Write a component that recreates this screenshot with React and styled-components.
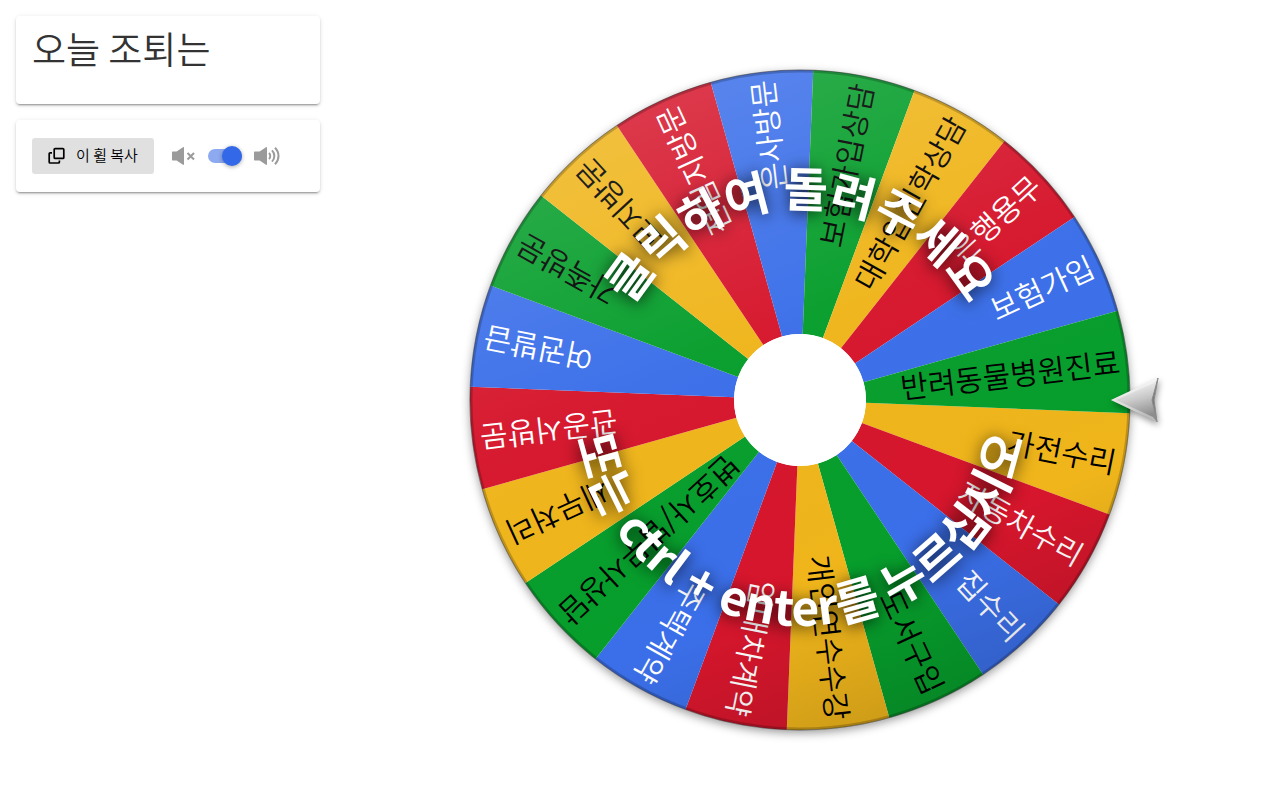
import React, { useState } from 'react';
import styled, { createGlobalStyle } from 'styled-components';

const CENTER = 400;
const RADIUS = 330;
const HOLE = 66;
const SLICE = 18;
const FIRST_ANGLE = 2.3;

const colors = {
  yellow: '#efb51b',
  red: '#d6162c',
  blue: '#3b6fe9',
  green: '#079e2c',
};

const entries = [
  { label: '가전수리', color: 'yellow' },
  { label: '자동차수리', color: 'red' },
  { label: '집수리', color: 'blue' },
  { label: '도서구입', color: 'green' },
  { label: '개인연수수강', color: 'yellow' },
  { label: '임대차계약', color: 'red' },
  { label: '주택계약', color: 'blue' },
  { label: '변호사/법무사상담', color: 'green' },
  { label: '세무처리', color: 'yellow' },
  { label: '관공서방문', color: 'red' },
  { label: '여권발급', color: 'blue' },
  { label: '가족방문', color: 'green' },
  { label: '묘지방문', color: 'yellow' },
  { label: '전임지방문', color: 'red' },
  { label: '은사방문', color: 'blue' },
  { label: '보험가입상담', color: 'green' },
  { label: '대학입진학상담', color: 'yellow' },
  { label: '은행용무', color: 'red' },
  { label: '보험가입', color: 'blue' },
  { label: '반려동물병원진료', color: 'green' },
];

const point = (angle, r) => {
  const rad = (angle * Math.PI) / 180;
  return `${(CENTER + r * Math.cos(rad)).toFixed(2)} ${(CENTER + r * Math.sin(rad)).toFixed(2)}`;
};

const slicePath = (start, end) =>
  `M${point(start, HOLE)} L${point(start, RADIUS)} A${RADIUS} ${RADIUS} 0 0 1 ${point(end, RADIUS)} L${point(end, HOLE)} A${HOLE} ${HOLE} 0 0 0 ${point(start, HOLE)} Z`;

const CopyIcon = () => (
  <svg width="18" height="18" viewBox="0 0 18 18" fill="none" stroke="#000" strokeWidth="1.7" strokeLinejoin="round" aria-hidden="true">
    <rect x="6.2" y="1.6" width="9.6" height="9.8" rx="1" />
    <path d="M4 5.800H2.200a1 1 0 0 0-1 1v8.200a1 1 0 0 0 1 1h8.200a1 1 0 0 0 1-1v-1.400" />
  </svg>
);

const MuteIcon = () => (
  <svg width="24" height="20" viewBox="0 0 24 20" aria-hidden="true">
    <path d="M1 5.500h3.600L11 1.200c.6-.3 1 0 1 .6v16.400c0 .6-.4.9-1 .6L4.600 14.500H1c-.6 0-1-.4-1-1v-7c0-.6.4-1 1-1z" fill="#9b9b9b" />
    <path d="M15.500 7l6.500 6.500M22 7l-6.500 6.500" stroke="#9b9b9b" strokeWidth="2" />
  </svg>
);

const VolumeIcon = () => (
  <svg width="28" height="20" viewBox="0 0 28 20" aria-hidden="true">
    <path d="M1 5.500h4.600L12 1.200c.6-.3 1 0 1 .6v16.400c0 .6-.4.9-1 .6L5.600 14.500H1c-.6 0-1-.4-1-1v-7c0-.6.4-1 1-1z" fill="#9b9b9b" />
    <path d="M15 7c1.600 1.700 1.600 4.300 0 6M18 4.400c3.100 3.200 3.100 8 0 11.200M21 1.800c4.700 4.700 4.700 11.700 0 16.400" fill="none" stroke="#9b9b9b" strokeWidth="2" />
  </svg>
);

const Wheel = () => (
  <WheelSvg viewBox="0 0 800 800" role="img" aria-label="오늘 조퇴는">
    <defs>
      <linearGradient id="shine" x1="0.3" y1="0" x2="0.7" y2="1">
        <stop offset="0" stopColor="#fff" stopOpacity="0.16" />
        <stop offset="0.4" stopColor="#fff" stopOpacity="0.02" />
        <stop offset="0.75" stopColor="#000" stopOpacity="0" />
        <stop offset="1" stopColor="#000" stopOpacity="0.16" />
      </linearGradient>
      <linearGradient id="pointer" x1="0" y1="0" x2="0.3" y2="1">
        <stop offset="0.3" stopColor="#ececec" />
        <stop offset="0.6" stopColor="#c8c8c8" />
        <stop offset="1" stopColor="#8d8d8d" />
      </linearGradient>
      <path id="topArc" d="M207 400 A193 193 0 0 1 593 400" />
      <path id="bottomArc" d="M174 400 A226 226 0 0 0 626 400" />
    </defs>

    <WheelShadow cx={CENTER} cy={CENTER} r={RADIUS} />
    {entries.map(({ label, color }, i) => (
      <path
        key={label}
        d={slicePath(FIRST_ANGLE + i * SLICE, FIRST_ANGLE + (i + 1) * SLICE)}
        fill={colors[color]}
      />
    ))}
    {entries.map(({ label, color }, i) => (
      <SliceLabel
        key={label}
        x={CENTER + 322}
        y={CENTER + 11}
        $light={color === 'red' || color === 'blue'}
        transform={`rotate(${FIRST_ANGLE + (i + 0.5) * SLICE} ${CENTER} ${CENTER})`}
      >
        {label}
      </SliceLabel>
    ))}
    <circle cx={CENTER} cy={CENTER} r={RADIUS} fill="url(#shine)" />
    <circle cx={CENTER} cy={CENTER} r={RADIUS - 1} fill="none" stroke="#000" strokeOpacity="0.2" strokeWidth="3" />
    <circle cx={CENTER} cy={CENTER} r={RADIUS} fill="none" stroke="#222" strokeOpacity="0.4" strokeWidth="1" />
    <circle cx={CENTER} cy={CENTER} r={HOLE} fill="#fff" />

    <Hint>
      <textPath href="#topArc" startOffset="50%">클릭하여 돌려주세요</textPath>
    </Hint>
    <Hint>
      <textPath href="#bottomArc" startOffset="50%">또는 ctrl + enter를 누르십시오</textPath>
    </Hint>

    <Pointer>
      <path d="M711 400L758 378L752 400L757 422Z" fill="url(#pointer)" />
      <path d="M711 400L758 378L754 383L716 400L753 417L757 422Z" fill="#fff" fillOpacity="0.4" />
      <path d="M758 378L752 400L757 422L754 400Z" fill="#777" stroke="#8a8a8a" strokeWidth="1" />
    </Pointer>
  </WheelSvg>
);

const App = () => {
  const [sound, setSound] = useState(true);

  return (
    <Page>
      <GlobalStyle />
      <Sidebar>
        <TitleCard>
          <Title>오늘 조퇴는</Title>
        </TitleCard>
        <ToolCard>
          <CopyButton type="button">
            <CopyIcon />
            <CopyLabel>이 휠 복사</CopyLabel>
          </CopyButton>
          <SoundGroup>
            <MuteIcon />
            <Switch
              type="checkbox"
              role="switch"
              aria-label="소리"
              checked={sound}
              onChange={(e) => setSound(e.target.checked)}
            />
            <VolumeIcon />
          </SoundGroup>
        </ToolCard>
      </Sidebar>
      <Stage>
        <Wheel />
      </Stage>
    </Page>
  );
};

const GlobalStyle = createGlobalStyle`
  * {
    box-sizing: border-box;
  }

  body {
    margin: 0;
    background: #fff;
    color: #333;
    font-family: "Noto Sans CJK KR", "Noto Sans", sans-serif;
  }
`;

const Page = styled.div`
  display: grid;
  grid-template-columns: 1fr 3fr;
  min-height: 100vh;
`;

const Sidebar = styled.aside`
  display: flex;
  flex-direction: column;
  gap: 16px;
  padding: 16px 0 16px 16px;
`;

const Card = styled.section`
  padding: 16px;
  background: #fff;
  border-radius: 4px;
  box-shadow: 0 3px 1px -2px rgba(0, 0, 0, 0.2), 0 2px 2px 0 rgba(0, 0, 0, 0.14),
    0 1px 5px 0 rgba(0, 0, 0, 0.12);
`;

const TitleCard = styled(Card)`
  padding-bottom: 40px;
`;

const Title = styled.h1`
  margin: 0;
  font-size: 37px;
  font-weight: 350;
  line-height: 32px;
`;

const ToolCard = styled(Card)`
  display: flex;
  align-items: center;
  gap: 18px;
  min-height: 72px;
`;

const CopyButton = styled.button`
  display: flex;
  align-items: center;
  gap: 10px;
  height: 36px;
  padding: 0 16px;
  border: none;
  border-radius: 3px;
  background: #e0e0e0;
  color: #000;
  font-family: inherit;
  font-size: 15px;
  font-weight: 350;
  cursor: pointer;
`;

const CopyLabel = styled.span`
  padding-bottom: 4px;
`;

const SoundGroup = styled.div`
  display: flex;
  align-items: center;
  gap: 12px;
`;

const Switch = styled.input`
  appearance: none;
  display: flex;
  align-items: center;
  width: 34px;
  height: 14px;
  margin: 0;
  border-radius: 7px;
  background: ${props => (props.checked ? '#8daaf1' : '#bdbdbd')};
  cursor: pointer;

  &::before {
    content: '';
    width: 20px;
    height: 20px;
    margin-left: ${props => (props.checked ? '14px' : '0')};
    border-radius: 50%;
    background: ${props => (props.checked ? '#3369e8' : '#fafafa')};
    box-shadow: 0 1px 4px rgba(0, 0, 0, 0.35);
  }
`;

const Stage = styled.main`
  display: flex;
  justify-content: center;
  align-items: center;
`;

const WheelSvg = styled.svg`
  width: 100%;
  height: 100vh;
  cursor: pointer;
`;

const WheelShadow = styled.circle`
  fill: #fff;
  filter: drop-shadow(0 3px 5px rgba(0, 0, 0, 0.4));
`;

const SliceLabel = styled.text`
  fill: ${props => (props.$light ? '#fff' : '#000')};
  font-size: 30px;
  font-weight: 350;
  text-anchor: end;
`;

const Hint = styled.text`
  fill: #fff;
  font-size: 48px;
  font-weight: 700;
  text-anchor: middle;
  filter: drop-shadow(0 2px 8px rgba(0, 0, 0, 0.8));
`;

const Pointer = styled.g`
  filter: drop-shadow(1px 3px 3px rgba(0, 0, 0, 0.4));
`;

export default App;
